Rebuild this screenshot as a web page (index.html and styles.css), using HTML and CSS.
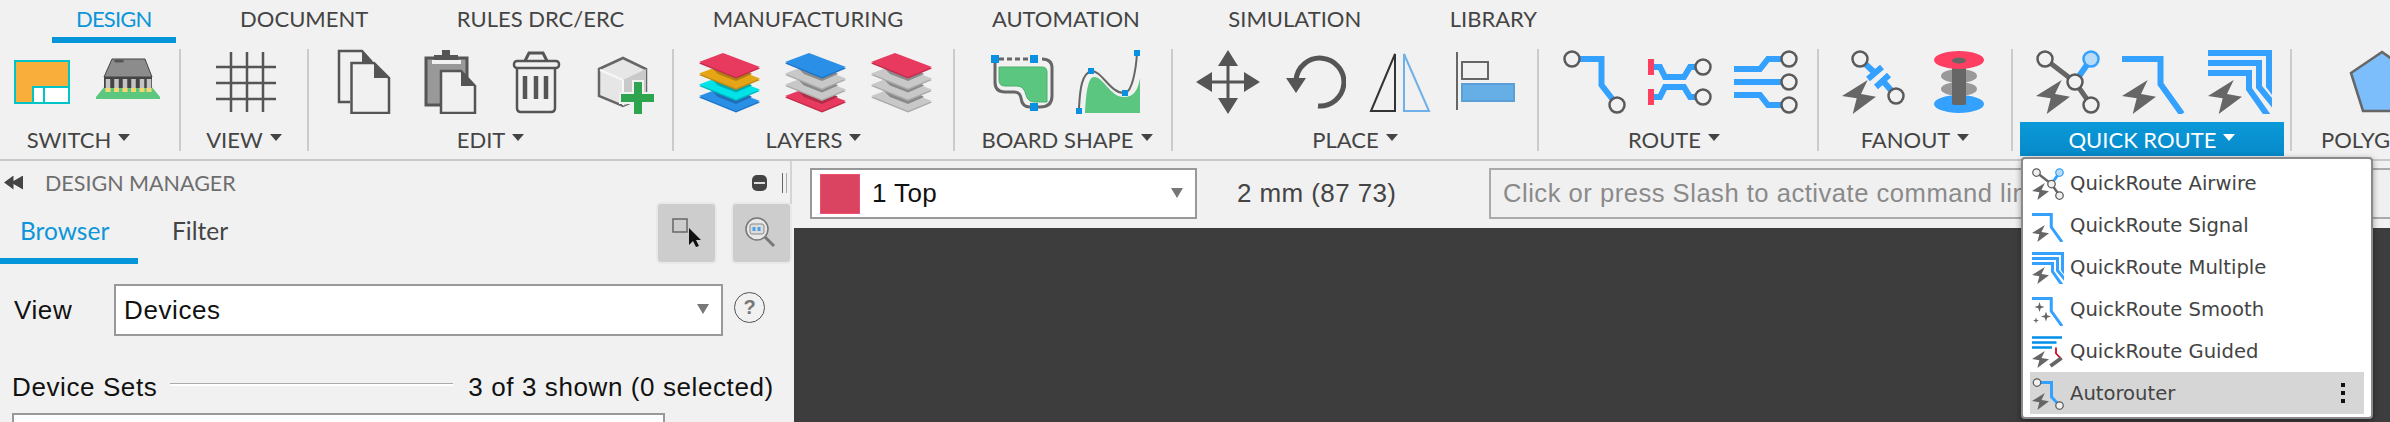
FILE: index.html
```html
<!DOCTYPE html>
<html lang="en">
<head>
    <meta charset="UTF-8">
    <meta name="viewport" content="width=device-width, initial-scale=1.0">
    <title>Design Manager</title>
    <link rel="stylesheet" href="styles.css">
</head>
<body>

    <!-- Shared icon parts, reused in the ribbon and in the quick route menu -->
    <svg class="defs" width="0" height="0">
        <defs>
            <polygon id="bolt" points="25.7,0 0,16 14.7,18.3 10.7,34 34,16.7 19,14"/>
            <polygon id="sheet" points="1,14 25,5 62,19 38,29"/>
            <polygon id="shade" points="14,20 38,29 51,24 54,26 38,33 20,26"/>
            <polygon id="star" points="0,-10 2.4,-2.4 10,0 2.4,2.4 0,10 -2.4,2.4 -10,0 -2.4,-2.4"/>

            <symbol id="q-airwire" viewBox="0 0 64 66">
                <use href="#bolt" y="32" fill="#666"/>
                <path d="M9 11 L39 34 L55 57" class="st-gray"/>
                <path d="M39 34 L55 11" class="st-blue"/>
                <circle cx="9" cy="11" r="7.5" class="pin"/>
                <circle cx="55" cy="11" r="7.5" fill="#b8dcf8" stroke="#33a1fd" stroke-width="2.5"/>
                <circle cx="39" cy="34" r="7.5" class="pin"/>
                <circle cx="55" cy="57" r="7.5" class="pin"/>
            </symbol>
            <symbol id="q-signal" viewBox="0 0 64 66">
                <use href="#bolt" y="32" fill="#666"/>
                <path d="M0 11 H38.5 V36 L60 66" class="st-blue"/>
            </symbol>
            <symbol id="q-multiple" viewBox="0 0 64 66">
                <use href="#bolt" y="32" fill="#666"/>
                <path d="M0 5 H61 V38 L70 50" class="st-blue"/>
                <path d="M0 15 H51 V39 L70 62" class="st-blue"/>
                <path d="M0 25 H41 V41 L60 68" class="st-blue"/>
            </symbol>
            <symbol id="q-smooth" viewBox="0 0 64 66">
                <path d="M0 11 H38.5 V36 L60 66" class="st-blue"/>
                <use href="#star" x="15" y="28" fill="#666"/>
                <use href="#star" x="28" y="47" fill="#666"/>
                <use href="#star" transform="translate(8 55) scale(.6)" fill="#666"/>
            </symbol>
            <symbol id="q-guided" viewBox="0 0 64 66">
                <use href="#bolt" y="32" fill="#666"/>
                <path d="M0 5 H60 M0 15 H49 M0 25 H40" stroke="#0090e8" stroke-width="5" fill="none"/>
                <path d="M48 25 V37 L59 48" stroke="#d0021b" stroke-width="3.5" fill="none"/>
                <path d="M37 62 L59 46" stroke="#666" stroke-width="8" fill="none"/>
            </symbol>
            <symbol id="q-auto" viewBox="0 0 64 66">
                <use href="#bolt" y="32" fill="#666"/>
                <path d="M10 11 H39 V40 L55 57" class="st-blue"/>
                <circle cx="10" cy="11" r="7.5" class="pin"/>
                <circle cx="55" cy="57" r="7.5" class="pin"/>
            </symbol>
        </defs>
    </svg>

    <div class="app">
        <div class="tabs">
            <div class="tab active">DESIGN</div>
            <div class="tab">DOCUMENT</div>
            <div class="tab">RULES DRC/ERC</div>
            <div class="tab">MANUFACTURING</div>
            <div class="tab">AUTOMATION</div>
            <div class="tab">SIMULATION</div>
            <div class="tab">LIBRARY</div>
        </div>

        <div class="ribbon">
            <div class="group g-switch">
                <div class="icons">
                    <svg class="icon" viewBox="0 0 64 66">
                        <rect x="5" y="13" width="54" height="42" fill="#f9ae3c" stroke="#00c4c8" stroke-width="2"/>
                        <rect x="23" y="39" width="36" height="16" fill="#fff" stroke="#00c4c8" stroke-width="2"/>
                        <path d="M34 39 V55" stroke="#00c4c8" stroke-width="2"/>
                    </svg>
                    <svg class="icon" viewBox="0 0 64 66">
                        <path d="M0 49 L9 38 H55 L64 49 V51 H0Z" fill="#5cc77e"/>
                        <path d="M16 11 H49 L56 29 H8Z" fill="#8c8c8c" stroke="#444"/>
                        <ellipse cx="23" cy="13" rx="5" ry="1.5" fill="#555"/>
                        <rect x="8" y="29" width="48" height="11" fill="#444"/>
                        <path d="M12 31 V44 M20.500 31 V44 M29 31 V44 M37.500 31 V44 M46 31 V44 M53 31 V44" stroke="#c4c4c4" stroke-width="4.500"/>
                        <path d="M12 40 V44 M20.500 40 V44 M29 40 V44 M37.500 40 V44 M46 40 V44 M53 40 V44" stroke="#f4d76e" stroke-width="5"/>
                    </svg>
                </div>
                <div class="label">SWITCH<span class="caret"></span></div>
            </div>
            <div class="sep"></div>

            <div class="group g-view">
                <div class="icons">
                    <svg class="icon" viewBox="0 0 64 66">
                        <path d="M19 4 V64 M35 4 V64 M51 4 V64 M4 19 H64 M4 35 H64 M4 51 H64" stroke="#555" stroke-width="2.500" fill="none"/>
                    </svg>
                </div>
                <div class="label">VIEW<span class="caret"></span></div>
            </div>
            <div class="sep"></div>

            <div class="group g-edit">
                <div class="icons">
                    <svg class="icon" viewBox="0 0 64 66">
                        <path d="M18 54 H7 V3 H30 L40 14" fill="none" stroke="#555" stroke-width="2.500"/>
                        <path d="M30 3 L40 14 H30Z" fill="#555"/>
                        <path d="M19.500 15 H42 L57 30 V65 H19.500Z" fill="#f1f1f1" stroke="#555" stroke-width="2.500"/>
                        <path d="M42 15 L57 30 H42Z" fill="#555"/>
                    </svg>
                    <svg class="icon" viewBox="0 0 64 66">
                        <rect x="8" y="10" width="41" height="47" fill="#999" stroke="#555" stroke-width="3"/>
                        <path d="M24 2 H32 V7 H40 V12 H16 V7 H24Z" fill="#555"/>
                        <rect x="14" y="12" width="29" height="4" fill="#f1f1f1"/>
                        <path d="M23 23 H43 L57 38 V65 H23Z" fill="#f1f1f1" stroke="#555" stroke-width="2.500"/>
                        <path d="M43 23 L57 38 H43Z" fill="#555"/>
                    </svg>
                    <svg class="icon" viewBox="0 0 64 66">
                        <path d="M21 13 L25 5 H39 L43 13" fill="none" stroke="#555" stroke-width="3"/>
                        <rect x="10" y="13" width="45" height="7" rx="3" fill="none" stroke="#555" stroke-width="2.500"/>
                        <path d="M13 20 V60 Q13 64 17 64 H47 Q51 64 51 60 V20" fill="none" stroke="#555" stroke-width="2.500"/>
                        <path d="M21 28 V51 M32 28 V51 M42 28 V51" stroke="#555" stroke-width="4.500"/>
                    </svg>
                    <svg class="icon" viewBox="0 0 64 66">
                        <path d="M9 21 L33 10 L56 21 V48 L33 58 L9 48Z" fill="#e6e6e6" stroke="#666" stroke-width="2.500"/>
                        <path d="M33 32 L56 21 V48 L33 58Z" fill="#c9c9c9"/>
                        <path d="M33 32 L10 22 M33 32 V57" stroke="#f7f7f7" stroke-width="2"/>
                        <path d="M43 33 H53 V45 H66 V55 H53 V67 H43 V55 H30 V45 H43Z" fill="#2ea44f" stroke="#f1f1f1" stroke-width="2"/>
                    </svg>
                </div>
                <div class="label">EDIT<span class="caret"></span></div>
            </div>
            <div class="sep"></div>

            <div class="group g-layers">
                <div class="icons">
                    <svg class="icon" viewBox="0 0 64 66">
                        <use href="#sheet" y="35.500" fill="#1f76c8"/><use href="#sheet" y="34" fill="#2a8fe6"/>
                        <use href="#shade" y="23" fill="#1f6fb8"/>
                        <use href="#sheet" y="24" fill="#00b8c0"/><use href="#sheet" y="22.500" fill="#00e3e8"/>
                        <use href="#shade" y="11.500" fill="#00a8b0"/>
                        <use href="#sheet" y="13" fill="#c08a12"/><use href="#sheet" y="11.500" fill="#e6a417"/>
                        <use href="#shade" y="0" fill="#b07f10"/>
                        <use href="#sheet" y="1.500" fill="#c22e4c"/><use href="#sheet" fill="#e83a5e"/>
                    </svg>
                    <svg class="icon" viewBox="0 0 64 66">
                        <use href="#sheet" y="35.500" fill="#c22e4c"/><use href="#sheet" y="34" fill="#e83a5e"/>
                        <use href="#shade" y="23" fill="#b02c48"/>
                        <use href="#sheet" y="24" fill="#aaa"/><use href="#sheet" y="22.500" fill="#c8c8c8"/>
                        <use href="#shade" y="11.500" fill="#8a8a8a"/>
                        <use href="#sheet" y="13" fill="#aaa"/><use href="#sheet" y="11.500" fill="#c8c8c8"/>
                        <use href="#shade" y="0" fill="#8a8a8a"/>
                        <use href="#sheet" y="1.500" fill="#1f76c8"/><use href="#sheet" fill="#2a8fe6"/>
                    </svg>
                    <svg class="icon" viewBox="0 0 64 66">
                        <use href="#sheet" y="35.500" fill="#aaa"/><use href="#sheet" y="34" fill="#c8c8c8"/>
                        <use href="#shade" y="23" fill="#8a8a8a"/>
                        <use href="#sheet" y="24" fill="#aaa"/><use href="#sheet" y="22.500" fill="#c8c8c8"/>
                        <use href="#shade" y="11.500" fill="#8a8a8a"/>
                        <use href="#sheet" y="13" fill="#aaa"/><use href="#sheet" y="11.500" fill="#c8c8c8"/>
                        <use href="#shade" y="0" fill="#8a8a8a"/>
                        <use href="#sheet" y="1.500" fill="#c22e4c"/><use href="#sheet" fill="#e83a5e"/>
                    </svg>
                </div>
                <div class="label">LAYERS<span class="caret"></span></div>
            </div>
            <div class="sep"></div>

            <div class="group g-board">
                <div class="icons">
                    <svg class="icon" viewBox="0 0 64 66">
                        <path d="M9 19 H52 Q57 19 57 24 V54 H44 Q38 54 36 47 Q34 38 27 38 H15 Q9 38 9 32Z" fill="#5ac67f" stroke="#4fb070"/>
                        <path d="M5 11 V34 Q5 44 15 44 H24 Q30 44 31 50 Q32 59 40 59 H50 Q62 59 62 48 V20 Q62 11 52 11" fill="none" stroke="#666" stroke-width="3"/>
                        <path d="M9 11 H40" stroke="#666" stroke-width="3" stroke-dasharray="5 3"/>
                        <path d="M1 7 H9 V15 H1Z M40 7 H48 V15 H40Z M40 55 H48 V63 H40Z" fill="#0a90e0"/>
                    </svg>
                    <svg class="icon" viewBox="0 0 64 66">
                        <path d="M9 65 C10 45 12 29 18 29 C28 29 34 49 48 49 C58 49 62 42 64 30 V65Z" fill="#5ac67f"/>
                        <path d="M3 60 C4 40 6 26 15 23 C26 22 34 46 49 45 C56 44 60 22 61 5" fill="none" stroke="#666" stroke-width="2"/>
                        <path d="M0 60 H6 V66 H0Z M12 20 H18 V26 H12Z M46 42 H52 V48 H46Z M58 2 H64 V8 H58Z" fill="#0a90e0"/>
                    </svg>
                </div>
                <div class="label">BOARD SHAPE<span class="caret"></span></div>
            </div>
            <div class="sep"></div>

            <div class="group g-place">
                <div class="icons">
                    <svg class="icon" viewBox="0 0 64 66">
                        <path d="M32 2 L42 18 H33.500 V32.500 H48 V24 L64 34 L48 44 V35.500 H33.500 V50 H42 L32 66 L22 50 H30.500 V35.500 H16 V44 L0 34 L16 24 V32.500 H30.500 V18 H22Z" fill="#555"/>
                    </svg>
                    <svg class="icon" viewBox="0 0 64 66">
                        <path d="M36 58 A24 24 0 1 0 14 32" fill="none" stroke="#555" stroke-width="5"/>
                        <path d="M4 30 H24 L14 45Z" fill="#555"/>
                    </svg>
                    <svg class="icon" viewBox="0 0 64 66">
                        <path d="M27 6 V63 H3Z" fill="none" stroke="#333" stroke-width="2"/>
                        <path d="M36 6 V63 H61Z" fill="none" stroke="#6fb0e8" stroke-width="2"/>
                    </svg>
                    <svg class="icon" viewBox="0 0 64 66">
                        <path d="M3 4 V62" stroke="#666" stroke-width="2"/>
                        <rect x="8" y="14" width="26" height="17" fill="none" stroke="#666" stroke-width="2"/>
                        <rect x="8" y="36" width="52" height="17" fill="#66afe6" stroke="#5a9fd6" stroke-width="2"/>
                    </svg>
                </div>
                <div class="label">PLACE<span class="caret"></span></div>
            </div>
            <div class="sep"></div>

            <div class="group g-route">
                <div class="icons">
                    <svg class="icon" viewBox="0 0 64 66">
                        <path d="M10 11 H39.500 V37 L55 57" class="st-blue"/>
                        <circle cx="10" cy="11" r="7.500" class="pin"/>
                        <circle cx="55" cy="57" r="7.500" class="pin"/>
                    </svg>
                    <svg class="icon" viewBox="0 0 64 66">
                        <path d="M6 19 H12 L17 29 H36 L42 19 H55" class="st-blue"/>
                        <path d="M6 49 H12 L17 39 H36 L42 49 H55" class="st-blue"/>
                        <path d="M0 11 H6 V27 H0Z M0 41 H6 V57 H0Z" fill="#ff3f62"/>
                        <circle cx="55" cy="19" r="7.500" class="pin"/>
                        <circle cx="55" cy="49" r="7.500" class="pin"/>
                    </svg>
                    <svg class="icon" viewBox="0 0 64 66">
                        <path d="M0 21 H26 L34 11 H55" class="st-blue"/>
                        <path d="M0 34 H55" class="st-blue"/>
                        <path d="M0 47 H26 L34 57 H55" class="st-blue"/>
                        <circle cx="55" cy="11" r="7.500" class="pin"/>
                        <circle cx="55" cy="34" r="7.500" class="pin"/>
                        <circle cx="55" cy="57" r="7.500" class="pin"/>
                    </svg>
                </div>
                <div class="label">ROUTE<span class="caret"></span></div>
            </div>
            <div class="sep"></div>

            <div class="group g-fanout">
                <div class="icons">
                    <svg class="icon" viewBox="0 0 64 66">
                        <use href="#bolt" y="32" fill="#666"/>
                        <path d="M18 11 L33 25 M41 33 L54 48 M26 31 L40 19 M34 39 L47 27" class="st-blue"/>
                        <circle cx="18" cy="11" r="7.500" class="pin"/>
                        <circle cx="54" cy="48" r="7.500" class="pin"/>
                    </svg>
                    <svg class="icon" viewBox="0 0 64 66">
                        <ellipse cx="31" cy="56" rx="25" ry="9" fill="#33a1fd"/>
                        <ellipse cx="31" cy="28" rx="18" ry="7" fill="#999"/>
                        <ellipse cx="31" cy="41" rx="18" ry="7" fill="#999"/>
                        <rect x="24" y="16" width="14" height="41" rx="2" fill="#666"/>
                        <ellipse cx="31" cy="12" rx="25" ry="9" fill="#ff3f62"/>
                        <ellipse cx="31" cy="12.500" rx="7" ry="3" fill="#666"/>
                    </svg>
                </div>
                <div class="label">FANOUT<span class="caret"></span></div>
            </div>
            <div class="sep"></div>

            <div class="group g-quick">
                <div class="icons">
                    <svg class="icon"><use href="#q-airwire"/></svg>
                    <svg class="icon"><use href="#q-signal"/></svg>
                    <svg class="icon"><use href="#q-multiple"/></svg>
                </div>
                <div class="label">QUICK ROUTE<span class="caret"></span></div>
            </div>
            <div class="sep"></div>

            <div class="group g-polygon">
                <div class="icons">
                    <svg class="icon icon-wide" viewBox="0 0 72 66">
                        <path d="M36 4 L5 25 L17 63 H54 L66 25Z" fill="#7cbdfb" stroke="#666" stroke-width="2.500"/>
                    </svg>
                </div>
                <div class="label">POLYGON</div>
            </div>
        </div>

        <div class="workspace">
            <div class="panel">
                <div class="panel-head">
                    <span class="collapse"></span>
                    <span class="panel-title">DESIGN MANAGER</span>
                    <span class="pill"></span>
                    <span class="grip"></span>
                </div>
                <div class="panel-tabs">
                    <div class="panel-tab active">Browser</div>
                    <div class="panel-tab filter">Filter</div>
                    <div class="tool-btn first">
                        <svg width="57" height="58" viewBox="0 0 57 58">
                            <rect x="15" y="15" width="14" height="13" fill="none" stroke="#666" stroke-width="1.500"/>
                            <path d="M31 24 V41 L35 37 L38 43 L41 42 L38 36 L43 36Z" fill="#111"/>
                        </svg>
                    </div>
                    <div class="tool-btn">
                        <svg width="57" height="58" viewBox="0 0 57 58">
                            <circle cx="24" cy="25" r="11" fill="#e8e8e8" stroke="#777" stroke-width="1.500"/>
                            <rect x="17" y="20" width="14" height="10" rx="2" fill="#dcdcdc" stroke="#888"/>
                            <path d="M21 23 V27 M26 23 V27" stroke="#4a9fe8" stroke-width="3"/>
                            <path d="M32 33 L41 42" stroke="#777" stroke-width="3"/>
                        </svg>
                    </div>
                </div>
                <div class="view-row">
                    <label class="view-label">View</label>
                    <div class="select view-select">Devices<span class="select-caret"></span></div>
                    <div class="help">?</div>
                </div>
                <div class="sets-row">
                    <span>Device Sets</span>
                    <span class="rule"></span>
                    <span>3 of 3 shown (0 selected)</span>
                </div>
                <div class="sets-box"></div>
            </div>

            <div class="main">
                <div class="cmd-bar">
                    <div class="select layer-select">
                        <span class="swatch"></span>1 Top<span class="select-caret"></span>
                    </div>
                    <div class="coords">2 mm (87 73)</div>
                    <div class="cmd-input">Click or press Slash to activate command line mode</div>
                </div>
                <div class="canvas"></div>
            </div>
        </div>

        <div class="menu">
            <div class="menu-item"><svg class="menu-icon"><use href="#q-airwire"/></svg>QuickRoute Airwire</div>
            <div class="menu-item"><svg class="menu-icon"><use href="#q-signal"/></svg>QuickRoute Signal</div>
            <div class="menu-item"><svg class="menu-icon"><use href="#q-multiple"/></svg>QuickRoute Multiple</div>
            <div class="menu-item"><svg class="menu-icon"><use href="#q-smooth"/></svg>QuickRoute Smooth</div>
            <div class="menu-item"><svg class="menu-icon"><use href="#q-guided"/></svg>QuickRoute Guided</div>
            <div class="menu-item hover"><svg class="menu-icon"><use href="#q-auto"/></svg>Autorouter<span class="dots"></span></div>
        </div>
    </div>

</body>
</html>
```

FILE: styles.css
```css
* {
    box-sizing: border-box;
}

body {
    margin: 0;
    background-color: #f1f1f1;
    font-family: "Liberation Sans", Arial, sans-serif;
}

.defs {
    position: absolute;
}

.app {
    position: relative;
    width: 2390px;
    height: 422px;
    overflow: hidden;
    display: flex;
    flex-direction: column;
}

/* Top tabs */
.tabs {
    display: flex;
    height: 43px;
    padding-left: 52px;
    gap: 40.5px;
    font-family: Lato, sans-serif;
    font-size: 22px;
    color: #444;
}

.tab {
    padding: 5px 24px 0;
    line-height: 28px;
}

.tab.active {
    letter-spacing: -0.8px;
    color: #0b96d9;
    border-bottom: 6px solid #0596d9;
}

/* Ribbon */
.ribbon {
    display: flex;
    height: 118px;
    flex: none;
    border-bottom: 2px solid #c9c9c9;
    font-family: Lato, sans-serif;
    font-size: 22px;
    color: #444;
}

.sep {
    flex: none;
    width: 2px;
    height: 102px;
    margin-top: 6px;
    background-color: #cbcbcb;
}

.group {
    flex: none;
    padding-top: 5px;
}

.icons {
    display: flex;
    gap: 22px;
    height: 66px;
}

.icon {
    flex: none;
    width: 64px;
    height: 66px;
}

.icon-wide {
    width: 72px;
}

.label {
    display: flex;
    justify-content: center;
    align-items: center;
    height: 34px;
    margin-top: 8px;
}

.caret {
    margin-left: 7px;
    margin-top: -3px;
    border-left: 6px solid transparent;
    border-right: 6px solid transparent;
    border-top: 7px solid #444;
}

.g-switch { width: 179px; }
.g-switch .icons { padding-left: 10px; }
.g-switch .label { padding-right: 22px; }
.g-view { width: 126px; }
.g-view .icons { padding-left: 31px; }
.g-edit { width: 363px; }
.g-edit .icons { padding-left: 23px; }
.g-layers { width: 279px; }
.g-layers .icons { padding-left: 24px; }
.g-board { width: 216px; }
.g-board .icons { padding-left: 35px; }
.g-board .label { padding-left: 8px; }
.g-place { width: 364px; }
.g-place .icons { padding-left: 23px; }
.g-route { width: 278px; }
.g-route .icons { padding-left: 23px; }
.g-route .label { padding-right: 8px; }
.g-fanout { width: 192px; }
.g-fanout .icons { padding-left: 23px; }
.g-quick { width: 277px; }
.g-quick .icons { padding-left: 23px; }

.g-quick .label {
    margin-left: 7px;
    margin-right: 6px;
    color: #fff;
    background: linear-gradient(#0a9ad9, #0789c9);
}

.g-quick .caret {
    border-top-color: #fff;
}

.g-polygon { width: 98px; }
.g-polygon .icons { padding-left: 54px; }

.g-polygon .label {
    justify-content: flex-start;
    padding-left: 29px;
    white-space: nowrap;
}

/* Lower part */
.workspace {
    display: flex;
    flex: 1;
    min-height: 0;
}

.panel {
    flex: none;
    width: 794px;
    padding-right: 2px;
    font-size: 26px;
    letter-spacing: 0.6px;
    color: #111;
}

.panel-head {
    display: flex;
    align-items: center;
    height: 43px;
    padding-left: 4px;
    border-right: 2px solid #d4d4d4;
}

.collapse {
    width: 19px;
    height: 14px;
    background-color: #444;
    clip-path: polygon(0 50%, 50% 0, 50% 40%, 100% 0, 100% 100%, 50% 60%, 50% 100%);
}

.panel-title {
    margin-left: 22px;
    font-family: Lato, sans-serif;
    font-size: 21.5px;
    letter-spacing: 0;
    color: #6e6e6e;
}

.pill {
    position: relative;
    width: 15px;
    height: 16px;
    margin-left: auto;
    border-radius: 5px;
    background-color: #444;
}

.pill::after {
    content: "";
    position: absolute;
    left: 2px;
    right: 2px;
    top: 7px;
    height: 2px;
    background-color: #ddd;
}

.grip {
    width: 5px;
    height: 20px;
    margin-left: 15px;
    margin-right: 3px;
    border-left: 1px solid #666;
    border-right: 1px solid #aaa;
}

.panel-tabs {
    display: flex;
    height: 60px;
    padding-right: 2px;
    font-family: Lato, sans-serif;
    font-size: 24.5px;
    letter-spacing: 0;
    color: #444;
}

.panel-tab {
    padding-top: 12px;
}

.panel-tab.active {
    width: 138px;
    padding-left: 20px;
    color: #0b96d9;
    border-bottom: 6px solid #0596d9;
}

.panel-tab.filter {
    margin-left: 34px;
}

.tool-btn {
    width: 57px;
    height: 58px;
    margin-left: 18px;
    border-radius: 3px;
    background-color: #cdcdcd;
    box-shadow: 0 0 0 2px #e9e9e9;
}

.tool-btn.first {
    margin-left: auto;
}

.view-row {
    display: flex;
    align-items: center;
    height: 52px;
    margin-top: 20px;
    padding-left: 14px;
}

.view-label {
    width: 100px;
}

.select {
    position: relative;
    display: flex;
    align-items: center;
    background-color: #fff;
    border: 2px solid #999;
}

.select-caret {
    position: absolute;
    right: 12px;
    top: 50%;
    margin-top: -6px;
    border-left: 6px solid transparent;
    border-right: 6px solid transparent;
    border-top: 10px solid #777;
}

.view-select {
    width: 609px;
    height: 52px;
    padding-left: 8px;
}

.help {
    width: 31px;
    height: 31px;
    margin-left: 11px;
    margin-top: -6px;
    border: 1px solid #555;
    border-radius: 50%;
    text-align: center;
    font-size: 20px;
    font-weight: bold;
    line-height: 29px;
    letter-spacing: 0;
    color: #777;
}

.sets-row {
    display: flex;
    align-items: center;
    height: 30px;
    margin-top: 36px;
    padding-left: 12px;
}

.rule {
    width: 283px;
    height: 3px;
    margin: -6px 15px 0 13px;
    background-color: #fff;
    border-top: 1px solid #aaa;
}

.sets-box {
    width: 653px;
    height: 40px;
    margin: 11px 0 0 12px;
    background-color: #fff;
    border: 2px solid #999;
}

.main {
    display: flex;
    flex-direction: column;
    flex: 1;
    min-width: 0;
}

.cmd-bar {
    display: flex;
    height: 67px;
    padding-top: 7px;
    padding-left: 16px;
    padding-bottom: 9px;
    font-size: 26px;
    letter-spacing: 0.4px;
}

.layer-select {
    flex: none;
    width: 387px;
    color: #111;
}

.swatch {
    width: 40px;
    height: 40px;
    margin: 0 12px 0 8px;
    background-color: #db4460;
    border: 1px solid #f0506e;
}

.coords {
    flex: none;
    width: 292px;
    padding-left: 40px;
    align-self: center;
    color: #444;
}

.cmd-input {
    flex: 1;
    display: flex;
    align-items: center;
    padding-left: 12px;
    white-space: nowrap;
    overflow: hidden;
    font-size: 25.6px;
    letter-spacing: 0.5px;
    color: #8a8a8a;
    background-color: #f0f0f0;
    border: 2px solid #aaa;
    border-right: 0;
}

.canvas {
    flex: 1;
    background-color: #3d3d3d;
}

/* Quick route dropdown */
.menu {
    position: absolute;
    left: 2021px;
    top: 157px;
    width: 352px;
    height: 262px;
    padding: 3px 7px;
    background-color: #fff;
    border: 2px solid #8a8a8a;
    border-radius: 4px;
    box-shadow: 0 2px 6px rgba(0, 0, 0, 0.4);
    font-family: "DejaVu Sans", sans-serif;
    font-size: 19.6px;
    color: #444;
}

.menu-item {
    position: relative;
    display: flex;
    align-items: center;
    gap: 6px;
    height: 42px;
    padding-left: 2px;
    white-space: nowrap;
}

.menu-item.hover {
    background-color: #d6d6d6;
}

.menu-icon {
    flex: none;
    width: 32px;
    height: 33px;
}

.dots {
    position: absolute;
    right: 19px;
    top: 11px;
    width: 4px;
    height: 4px;
    background-color: #111;
    box-shadow: 0 8px 0 #111, 0 16px 0 #111;
}

/* Shared SVG strokes */
.st-blue {
    fill: none;
    stroke: #33a1fd;
    stroke-width: 6;
}

.st-gray {
    fill: none;
    stroke: #666;
    stroke-width: 5;
}

.pin {
    fill: #f1f1f1;
    stroke: #5a5a5a;
    stroke-width: 2.5;
}
```
